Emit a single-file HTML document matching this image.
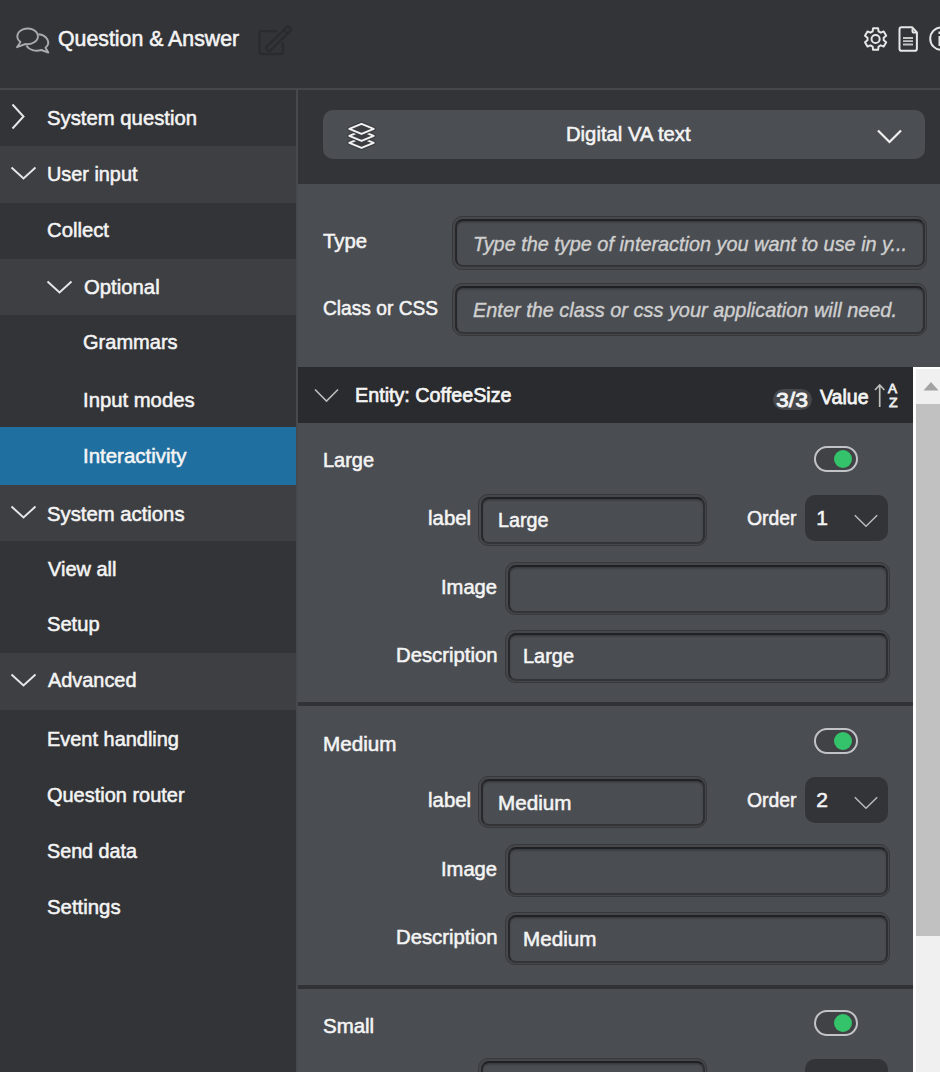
<!DOCTYPE html>
<html><head><meta charset="utf-8">
<style>
*{margin:0;padding:0;box-sizing:border-box}
html,body{width:940px;height:1072px;overflow:hidden;background:#333438;font-family:"Liberation Sans",sans-serif;color:#f2f2f2}
.a{position:absolute}
.t{position:absolute;white-space:nowrap;line-height:1;transform-origin:0 0}
#hdr{left:0;top:0;width:940px;height:88px;background:#333438}
#hdrb{left:0;top:88px;width:940px;height:2px;background:#45474b}
#side{left:0;top:90px;width:296px;height:982px;background:#333438}
.row{position:absolute;left:0;width:296px}
.lt{background:#3e3f43}
.sel{background:#1f6fa0}
#div{left:296px;top:90px;width:2px;height:982px;background:#464a4f}
#ctop{left:298px;top:90px;width:642px;height:94px;background:#333438}
#dd{left:323px;top:110px;width:602px;height:49px;background:#4b4e53;border-radius:10px}
#form{left:298px;top:184px;width:642px;height:183px;background:#4a4d52}
.inp{position:absolute;border-radius:10px;border:1px solid #37383b;background:#45474b}.inp::before{content:"";position:absolute;left:1.5px;top:1.5px;right:1.5px;bottom:1.5px;border-radius:8px;border:2px solid;border-color:#202124 #2e2f32 #333437 #27282b;background:#4a4d52;box-shadow:inset 0 1.5px 1.5px rgba(0,0,0,.25)}
#ent{left:298px;top:367px;width:615px;height:56px;background:#2a2b2e}
#items{left:298px;top:423px;width:615px;height:649px;background:#4a4d52}
.hr{position:absolute;left:298px;width:615px;height:4px;background:#303236}
.sel2{position:absolute;background:#333438;border-radius:10px}
.tog{position:absolute;width:44px;height:26px;border-radius:13px;border:2px solid #c2c3c6;background:#404246}
.tog i{position:absolute;left:18px;top:2px;width:18px;height:18px;border-radius:50%;background:#34c26a}
#sb{left:913px;top:367px;width:27px;height:705px;background:#f0f0f0;border-left:3px solid #ffffff}
#sbtop{left:913px;top:367px;width:27px;height:2px;background:#fff}
#thumb{left:916px;top:404px;width:24px;height:532px;background:#c1c1c1}
</style></head><body>
<div id="hdr" class="a"></div>
<div id="hdrb" class="a"></div>
<!-- header -->
<svg class="a" style="left:0;top:0" width="940" height="89" viewBox="0 0 940 89">
 <g fill="none" stroke="#a9aaae" stroke-width="1.9" stroke-linejoin="round">
  <path d="M20.5 42A10.3 7.8 0 1 1 25.5 44L17 47.2Z"/>
  <path d="M38.4 34.2A11.2 8.3 0 0 1 45.5 47.8L48.3 52.5L41.3 50A11.2 8.3 0 0 1 26.5 45.6"/>
 </g>
 <g fill="none" stroke="#2a2b2e" stroke-width="2.3" stroke-linejoin="round" stroke-linecap="round">
  <path d="M276.5 31.2H261.5Q259.6 31.2 259.6 33.1V52.1Q259.6 54 261.5 54H281Q282.9 54 282.9 52.1V43.5"/>
  <g transform="translate(278.5 38.8) rotate(-44.5)"><rect x="-16" y="-2.6" width="32" height="5.2" rx="2.2"/><path d="M10 -2.6V2.6"/></g>
 </g>
 <g fill="none" stroke="#e6e6e6" stroke-width="2" stroke-linejoin="round">
  <path d="M872.66 31.34L873.10 28.18L878.10 28.18L878.54 31.34L880.76 32.63L883.72 31.43L886.21 35.75L883.70 37.72L883.70 40.28L886.21 42.25L883.72 46.57L880.76 45.37L878.54 46.66L878.10 49.82L873.10 49.82L872.66 46.66L870.44 45.37L867.48 46.57L864.99 42.25L867.50 40.28L867.50 37.72L864.99 35.75L867.48 31.43L870.44 32.63Z"/>
  <circle cx="875.6" cy="39" r="4.1"/>
  <path d="M901.5 27.3H912.3L916.9 32.4V48.7Q916.9 50.8 914.8 50.8H901.5Q899.5 50.8 899.5 48.7V29.4Q899.5 27.3 901.5 27.3Z"/>
  <path d="M912.5 28.5V31Q912.5 32.6 914.1 32.6H916.3"/>
  <circle cx="941.5" cy="38.65" r="11.3"/>
 </g>
 <g stroke="#c4c4c4" stroke-width="1.8"><path d="M903 38H913M903 41.2H913M903 44.5H913"/></g>
 <g stroke="#e6e6e6" stroke-width="2"><path d="M939.5 31.5V34M939.5 36V46"/></g>
</svg>
<!-- sidebar -->
<div id="side" class="a"></div>
<div class="row lt" style="top:146px;height:56.5px"></div>
<div class="row lt" style="top:259px;height:56.3px"></div>
<div class="row sel" style="top:427px;height:58px"></div>
<div class="row lt" style="top:485px;height:56px"></div>
<div class="row lt" style="top:653px;height:57px"></div>

<svg class="a" style="left:10px;top:103px" width="16" height="27" viewBox="0 0 16 27"><path d="M2.5 1.5l11 12-11 12" fill="none" stroke="#e6e6e6" stroke-width="2"/></svg>
<svg class="a" style="left:10px;top:165px" width="27" height="16" viewBox="0 0 27 16"><path d="M1.5 2.5l12 11 12-11" fill="none" stroke="#e6e6e6" stroke-width="2"/></svg>
<svg class="a" style="left:46px;top:279px" width="27" height="16" viewBox="0 0 27 16"><path d="M1.5 2.5l12 11 12-11" fill="none" stroke="#e6e6e6" stroke-width="2"/></svg>
<svg class="a" style="left:10px;top:504px" width="27" height="16" viewBox="0 0 27 16"><path d="M1.5 2.5l12 11 12-11" fill="none" stroke="#e6e6e6" stroke-width="2"/></svg>
<svg class="a" style="left:10px;top:672px" width="27" height="16" viewBox="0 0 27 16"><path d="M1.5 2.5l12 11 12-11" fill="none" stroke="#e6e6e6" stroke-width="2"/></svg>

<div id="div" class="a"></div>

<!-- content top -->
<div id="ctop" class="a"></div>
<div id="dd" class="a"></div>
<svg class="a" style="left:0;top:0" width="400" height="170" viewBox="0 0 400 170"><g stroke-linejoin="round"><path d="M361.5 137.90L373.7 142.90L361.5 147.90L349.3 142.90Z" fill="#3c3e42" stroke="#3c3e42" stroke-width="4.4"/><path d="M361.5 137.90L373.7 142.90L361.5 147.90L349.3 142.90Z" fill="none" stroke="#f2f2f2" stroke-width="2.0"/><path d="M361.5 130.90L373.7 135.90L361.5 140.90L349.3 135.90Z" fill="#3c3e42" stroke="#3c3e42" stroke-width="4.4"/><path d="M361.5 130.90L373.7 135.90L361.5 140.90L349.3 135.90Z" fill="none" stroke="#f2f2f2" stroke-width="2.0"/><path d="M361.5 123.90L373.7 128.90L361.5 133.90L349.3 128.90Z" fill="#3c3e42" stroke="#3c3e42" stroke-width="4.4"/><path d="M361.5 123.90L373.7 128.90L361.5 133.90L349.3 128.90Z" fill="none" stroke="#f2f2f2" stroke-width="2.0"/></g></svg>
<svg class="a" style="left:876px;top:128px" width="27" height="17" viewBox="0 0 27 17"><path d="M2 2.5l11.5 11.5 11.5-11.5" fill="none" stroke="#f0f0f0" stroke-width="2.2"/></svg>

<div id="form" class="a"></div>
<div class="inp" style="left:452px;top:216px;width:475px;height:53.5px"></div>
<div class="inp" style="left:452px;top:283px;width:475px;height:53px"></div>

<!-- entity header -->
<div id="ent" class="a"></div>
<svg class="a" style="left:313px;top:387px" width="27" height="17" viewBox="0 0 27 17"><path d="M2 2.5l11.5 11.5 11.5-11.5" fill="none" stroke="#bdbdbd" stroke-width="1.6"/></svg>
<div class="a" style="left:773px;top:388.5px;width:39px;height:21px;border-radius:10.5px;background:#45474b"></div>
<svg class="a" style="left:872px;top:382px" width="30" height="27" viewBox="0 0 30 27">
 <g fill="none" stroke="#bdbdbd" stroke-width="1.7"><path d="M7.7 3v22M3 8l4.7-5 4.7 5"/></g>
</svg>

<!-- items -->
<div id="items" class="a"></div>

<!-- item Large -->
<div class="tog" style="left:814px;top:446px"><i></i></div>
<div class="inp" style="left:478px;top:494px;width:229px;height:52px"></div>
<div class="sel2" style="left:805px;top:495px;width:83px;height:46px"></div>
<svg class="a" style="left:852px;top:512px" width="28" height="17" viewBox="0 0 28 17"><path d="M2.8 3.2l11.2 11 11.2-11" fill="none" stroke="#b9babc" stroke-width="1.5"/></svg>
<div class="inp" style="left:505px;top:562px;width:385px;height:53px"></div>
<div class="inp" style="left:505px;top:630px;width:385px;height:53px"></div>
<div class="hr" style="top:702px"></div>

<!-- item Medium -->
<div class="tog" style="left:814px;top:728px"><i></i></div>
<div class="inp" style="left:478px;top:776px;width:229px;height:52px"></div>
<div class="sel2" style="left:805px;top:777px;width:83px;height:46px"></div>
<svg class="a" style="left:852px;top:794px" width="28" height="17" viewBox="0 0 28 17"><path d="M2.8 3.2l11.2 11 11.2-11" fill="none" stroke="#b9babc" stroke-width="1.5"/></svg>
<div class="inp" style="left:505px;top:844px;width:385px;height:53px"></div>
<div class="inp" style="left:505px;top:912px;width:385px;height:53px"></div>
<div class="hr" style="top:984.6px"></div>

<!-- item Small -->
<div class="tog" style="left:814px;top:1010px"><i></i></div>
<div class="inp" style="left:478px;top:1058px;width:229px;height:52px"></div>
<div class="sel2" style="left:805px;top:1059px;width:83px;height:46px"></div>

<!-- scrollbar -->
<div id="sb" class="a"></div>
<div id="sbtop" class="a"></div>
<svg class="a" style="left:923px;top:381px" width="17" height="10" viewBox="0 0 17 10"><path d="M0.5 9.5L8 1l7.5 8.5z" fill="#a3a3a3"/></svg>
<div id="thumb" class="a"></div>
<div class="t" style="left:47.20px;top:106.68px;font-size:21px;transform:scaleX(0.9667);color:#f4f4f4;-webkit-text-stroke:0.55px #f4f4f4">System question</div>
<div class="t" style="left:47.20px;top:162.90px;font-size:21px;transform:scaleX(0.9452);color:#f4f4f4;-webkit-text-stroke:0.55px #f4f4f4">User input</div>
<div class="t" style="left:47.20px;top:218.50px;font-size:21px;transform:scaleX(0.9652);color:#f4f4f4;-webkit-text-stroke:0.55px #f4f4f4">Collect</div>
<div class="t" style="left:83.66px;top:276.22px;font-size:21px;transform:scaleX(0.9671);color:#f4f4f4;-webkit-text-stroke:0.55px #f4f4f4">Optional</div>
<div class="t" style="left:83.28px;top:331.38px;font-size:21px;transform:scaleX(0.9536);color:#f4f4f4;-webkit-text-stroke:0.55px #f4f4f4">Grammars</div>
<div class="t" style="left:83.28px;top:388.68px;font-size:21px;transform:scaleX(0.9654);color:#f4f4f4;-webkit-text-stroke:0.55px #f4f4f4">Input modes</div>
<div class="t" style="left:83.28px;top:444.76px;font-size:21px;transform:scaleX(0.9741);color:#f4f4f4;-webkit-text-stroke:0.55px #f4f4f4">Interactivity</div>
<div class="t" style="left:46.74px;top:503.20px;font-size:21px;transform:scaleX(0.9658);color:#f4f4f4;-webkit-text-stroke:0.55px #f4f4f4">System actions</div>
<div class="t" style="left:47.54px;top:557.82px;font-size:21px;transform:scaleX(0.9511);color:#f4f4f4;-webkit-text-stroke:0.55px #f4f4f4">View all</div>
<div class="t" style="left:46.74px;top:613.12px;font-size:21px;transform:scaleX(0.9585);color:#f4f4f4;-webkit-text-stroke:0.55px #f4f4f4">Setup</div>
<div class="t" style="left:47.54px;top:669.24px;font-size:21px;transform:scaleX(0.9471);color:#f4f4f4;-webkit-text-stroke:0.55px #f4f4f4">Advanced</div>
<div class="t" style="left:46.74px;top:727.80px;font-size:21px;transform:scaleX(0.9498);color:#f4f4f4;-webkit-text-stroke:0.55px #f4f4f4">Event handling</div>
<div class="t" style="left:46.74px;top:784.22px;font-size:21px;transform:scaleX(0.9503);color:#f4f4f4;-webkit-text-stroke:0.55px #f4f4f4">Question router</div>
<div class="t" style="left:46.74px;top:839.72px;font-size:21px;transform:scaleX(0.9399);color:#f4f4f4;-webkit-text-stroke:0.55px #f4f4f4">Send data</div>
<div class="t" style="left:46.74px;top:896.02px;font-size:21px;transform:scaleX(0.9699);color:#f4f4f4;-webkit-text-stroke:0.55px #f4f4f4">Settings</div>
<div class="t" style="left:58.28px;top:28.90px;font-size:21.5px;transform:scaleX(0.9904);color:#f4f4f4;-webkit-text-stroke:0.55px #f4f4f4">Question &amp; Answer</div>
<div class="t" style="left:565.74px;top:122.60px;font-size:21px;transform:scaleX(0.9641);color:#f4f4f4;-webkit-text-stroke:0.55px #f4f4f4">Digital VA text</div>
<div class="t" style="left:322.96px;top:229.60px;font-size:21px;transform:scaleX(0.9659);color:#f4f4f4;-webkit-text-stroke:0.55px #f4f4f4">Type</div>
<div class="t" style="left:323.24px;top:297.12px;font-size:21px;transform:scaleX(0.9129);color:#f4f4f4;-webkit-text-stroke:0.55px #f4f4f4">Class or CSS</div>
<div class="t" style="left:473.40px;top:232.80px;font-size:21px;transform:scaleX(0.9455);font-style:italic;color:#cfcfcf;-webkit-text-stroke:0.4px #cfcfcf">Type the type of interaction you want to use in y...</div>
<div class="t" style="left:473.00px;top:299.34px;font-size:21px;transform:scaleX(0.9484);font-style:italic;color:#cfcfcf;-webkit-text-stroke:0.4px #cfcfcf">Enter the class or css your application will need.</div>
<div class="t" style="left:355.36px;top:384.26px;font-size:21px;transform:scaleX(0.9399);color:#f4f4f4;-webkit-text-stroke:0.7px #f4f4f4">Entity: CoffeeSize</div>
<div class="t" style="left:776.00px;top:389.22px;font-size:21px;transform:scaleX(1.0963);color:#f4f4f4;-webkit-text-stroke:0.8px #f4f4f4">3/3</div>
<div class="t" style="left:820.46px;top:386.06px;font-size:21px;transform:scaleX(0.9315);color:#f4f4f4;-webkit-text-stroke:0.8px #f4f4f4">Value</div>
<div class="t" style="left:888.42px;top:382.21px;font-size:13px;transform:scaleX(1.0402);color:#ececec;-webkit-text-stroke:0.8px #ececec">A</div>
<div class="t" style="left:888.92px;top:396.09px;font-size:13px;transform:scaleX(1.0733);color:#ececec;-webkit-text-stroke:0.8px #ececec">Z</div>
<div class="t" style="left:322.78px;top:448.96px;font-size:21px;transform:scaleX(0.9497);color:#f4f4f4;-webkit-text-stroke:0.55px #f4f4f4">Large</div>
<div class="t" style="left:428.24px;top:507.26px;font-size:21px;transform:scaleX(0.9719);color:#f4f4f4;-webkit-text-stroke:0.55px #f4f4f4">label</div>
<div class="t" style="left:497.66px;top:508.98px;font-size:21px;transform:scaleX(0.9400);color:#f4f4f4;-webkit-text-stroke:0.55px #f4f4f4">Large</div>
<div class="t" style="left:747.36px;top:507.14px;font-size:21px;transform:scaleX(0.9211);color:#f4f4f4;-webkit-text-stroke:0.55px #f4f4f4">Order</div>
<div class="t" style="left:816.36px;top:507.42px;font-size:21px;color:#f4f4f4;-webkit-text-stroke:0.55px #f4f4f4">1</div>
<div class="t" style="left:441.20px;top:575.86px;font-size:21px;transform:scaleX(0.9595);color:#f4f4f4;-webkit-text-stroke:0.55px #f4f4f4">Image</div>
<div class="t" style="left:395.78px;top:644.14px;font-size:21px;transform:scaleX(0.9670);color:#f4f4f4;-webkit-text-stroke:0.55px #f4f4f4">Description</div>
<div class="t" style="left:523.20px;top:644.82px;font-size:21px;transform:scaleX(0.9496);color:#f4f4f4;-webkit-text-stroke:0.55px #f4f4f4">Large</div>
<div class="t" style="left:322.78px;top:732.56px;font-size:21px;transform:scaleX(0.9837);color:#f4f4f4;-webkit-text-stroke:0.55px #f4f4f4">Medium</div>
<div class="t" style="left:428.24px;top:789.26px;font-size:21px;transform:scaleX(0.9719);color:#f4f4f4;-webkit-text-stroke:0.55px #f4f4f4">label</div>
<div class="t" style="left:497.66px;top:791.78px;font-size:21px;transform:scaleX(0.9838);color:#f4f4f4;-webkit-text-stroke:0.55px #f4f4f4">Medium</div>
<div class="t" style="left:747.36px;top:789.14px;font-size:21px;transform:scaleX(0.9211);color:#f4f4f4;-webkit-text-stroke:0.55px #f4f4f4">Order</div>
<div class="t" style="left:816.20px;top:789.42px;font-size:21px;color:#f4f4f4;-webkit-text-stroke:0.55px #f4f4f4">2</div>
<div class="t" style="left:441.20px;top:857.86px;font-size:21px;transform:scaleX(0.9595);color:#f4f4f4;-webkit-text-stroke:0.55px #f4f4f4">Image</div>
<div class="t" style="left:395.78px;top:926.14px;font-size:21px;transform:scaleX(0.9670);color:#f4f4f4;-webkit-text-stroke:0.55px #f4f4f4">Description</div>
<div class="t" style="left:523.20px;top:927.62px;font-size:21px;transform:scaleX(0.9838);color:#f4f4f4;-webkit-text-stroke:0.55px #f4f4f4">Medium</div>
<div class="t" style="left:322.78px;top:1014.56px;font-size:21px;transform:scaleX(0.9732);color:#f4f4f4;-webkit-text-stroke:0.55px #f4f4f4">Small</div>
</body></html>
